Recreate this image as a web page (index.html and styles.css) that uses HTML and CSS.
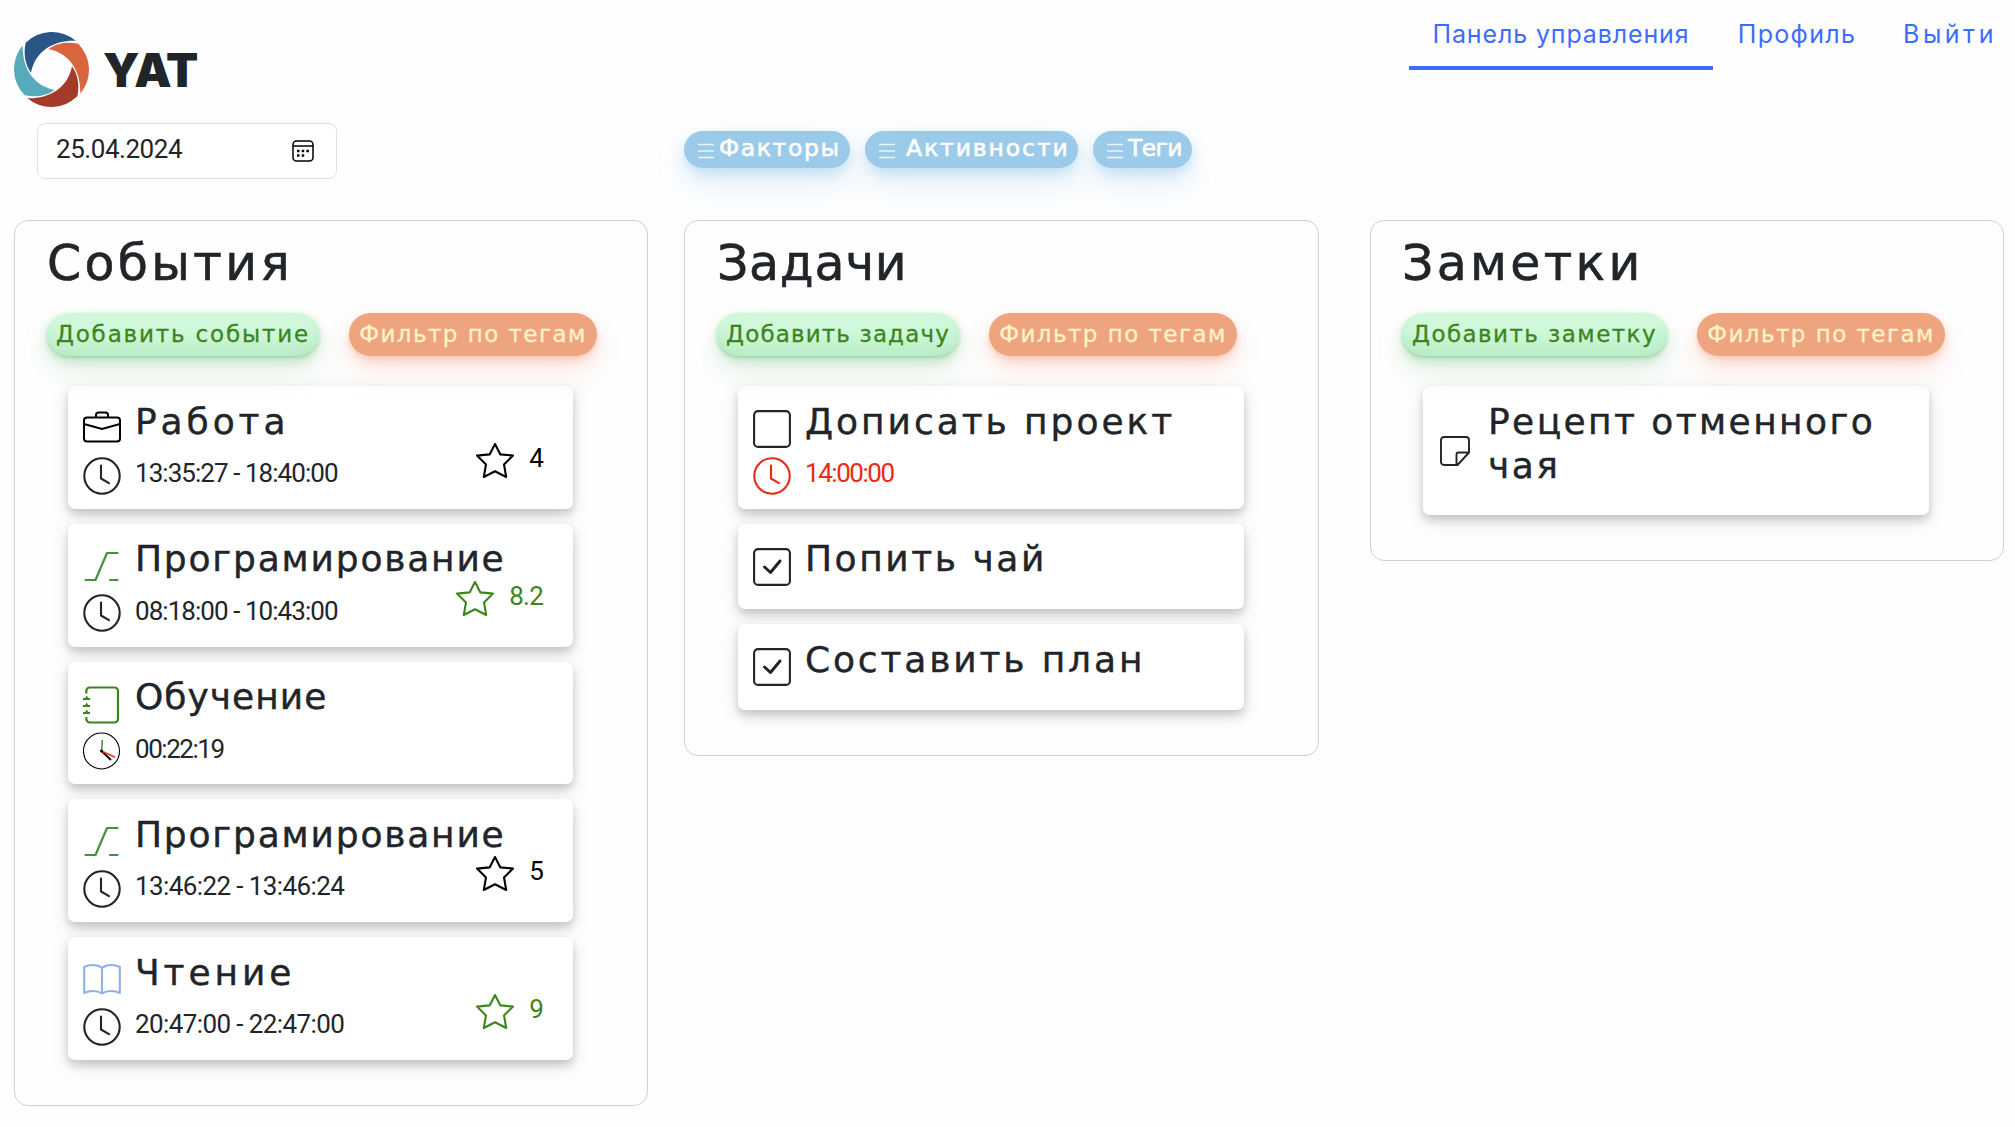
FILE: index.html
```
<!DOCTYPE html>
<html lang="ru">
<head>
<meta charset="utf-8">
<title>YAT</title>
<link rel="stylesheet" href="styles.css">
</head>
<body>
<svg class="sprite">
  <symbol id="clock" viewBox="0 0 38 38"><g fill="none" stroke="currentColor" stroke-width="2.1" stroke-linecap="round" stroke-linejoin="round"><circle cx="19" cy="19" r="17.7"/><path d="M18 8.5v13l8 4.7"/></g></symbol>
  <symbol id="star" viewBox="0 0 38 38"><path d="M19 2l5.4 10.4L37 13.6l-9 8.8 2.2 12.6L19 29.2 7.8 35 10 22.4 1 13.6l12.6-1.2z" fill="none" stroke="currentColor" stroke-width="2.1" stroke-linejoin="round"/></symbol>
  <symbol id="briefcase" viewBox="0 0 38 38"><g fill="none" stroke="currentColor" stroke-width="2"><rect x="1" y="7.5" width="36" height="24" rx="3"/><path d="M13 7.5V5a2.5 2.5 0 0 1 2.5-2.5h7A2.5 2.5 0 0 1 25 5V7.5M1 14l18 5 18-5"/></g></symbol>
  <symbol id="step" viewBox="0 0 38 38"><path d="M2.5 32H12.5L24 5h10.5M27 32h7.5" fill="none" stroke="#45913f" stroke-width="2.2" stroke-linecap="round" stroke-linejoin="round"/></symbol>
  <symbol id="journal" viewBox="0 0 38 38"><path d="M3.3 7.5V5a3.5 3.5 0 0 1 3.5-3.5H31.5A3.5 3.5 0 0 1 35 5v28a3.5 3.5 0 0 1-3.5 3.5H6.8A3.5 3.5 0 0 1 3.3 33v-2" fill="none" stroke="#3b851c" stroke-width="2.2"/><path d="M0 12h2.2l1.5-2.5 1.5 2.5H7v2H0zm0 7h2.2l1.5-2.5 1.5 2.5H7v2H0zm0 7h2.2l1.5-2.5 1.5 2.5H7v2H0z" fill="#3b851c"/></symbol>
  <symbol id="book" viewBox="0 0 38 38"><path d="M19 7C14 3 6 3.5 1.2 6v26C6 29.5 14 29 19 32.5c5-3.5 13-3 17.8-.5V6C32 3.5 24 3 19 7zV32.5" fill="none" stroke="#91b0e8" stroke-width="2.1" stroke-linejoin="round"/></symbol>
  <symbol id="square" viewBox="0 0 38 38"><rect x="1.1" y="1.1" width="35.8" height="35.8" rx="4" fill="none" stroke="currentColor" stroke-width="2.1"/></symbol>
  <symbol id="checked" viewBox="0 0 38 38"><rect x="1.1" y="1.1" width="35.8" height="35.8" rx="4" fill="none" stroke="currentColor" stroke-width="2.1"/><path d="M11.5 19l6 5.5L27 13" fill="none" stroke="currentColor" stroke-width="3" stroke-linecap="round" stroke-linejoin="round"/></symbol>
  <symbol id="list" viewBox="0 0 16 16"><path d="M0 1.5h16M0 8h16M0 14.5h16" stroke="currentColor" stroke-width="1.7"/></symbol>
</svg>

<header class="top">
  <div class="brand">
    <svg class="logo" viewBox="-37.5 -37.5 75 75">
      <path fill="#2a5587" d="M-25.8-26.8A37.2 37.2 0 0 1 24.2-28.8C4-29.5-16-20-20.5 3.2-27-6-28-17-25.8-26.8z"/>
      <path fill="#d9653f" transform="rotate(90)" d="M-25.8-26.8A37.2 37.2 0 0 1 24.2-28.8C4-29.5-16-20-20.5 3.2-27-6-28-17-25.8-26.8z"/>
      <path fill="#a43a29" transform="rotate(180)" d="M-25.8-26.8A37.2 37.2 0 0 1 24.2-28.8C4-29.5-16-20-20.5 3.2-27-6-28-17-25.8-26.8z"/>
      <path fill="#56abbb" transform="rotate(270)" d="M-25.8-26.8A37.2 37.2 0 0 1 24.2-28.8C4-29.5-16-20-20.5 3.2-27-6-28-17-25.8-26.8z"/>
    </svg>
    <span class="name">YAT</span>
  </div>
  <nav class="nav">
    <a class="active">Панель управления</a>
    <a class="profile">Профиль</a>
    <a class="logout">Выйти</a>
  </nav>
</header>

<div class="toolbar">
  <div class="date"><span class="num">25.04.2024</span>
    <svg viewBox="0 0 22 22"><rect x="1" y="1" width="20" height="20" rx="3.5" fill="none" stroke="#000" stroke-width="1.5"/><path d="M1 6h20" stroke="#000" stroke-width="1.5"/><path d="M5 11h2.5M9.7 11h2.5M14.4 11h2.5M5 15.5h2.5M9.7 15.5h2.5" stroke="#000" stroke-width="2.5"/></svg>
  </div>
  <div class="pills">
    <button class="pill factors"><svg><use href="#list"/></svg><span>Факторы</span></button>
    <button class="pill acts"><svg><use href="#list"/></svg><span>Активности</span></button>
    <button class="pill tags"><svg><use href="#list"/></svg><span>Теги</span></button>
  </div>
</div>

<main class="board">
  <section class="panel events">
    <h1>События</h1>
    <div class="actions"><button class="add">Добавить событие</button><button class="filter">Фильтр по тегам</button></div>
    <article class="card work">
      <svg class="icon black"><use href="#briefcase"/></svg><h2>Работа</h2>
      <svg class="icon"><use href="#clock"/></svg><p class="num">13:35:27 - 18:40:00</p>
      <div class="rating black"><svg><use href="#star"/></svg><b>4</b></div>
    </article>
    <article class="card coding">
      <svg class="icon"><use href="#step"/></svg><h2>Програмирование</h2>
      <svg class="icon"><use href="#clock"/></svg><p class="num">08:18:00 - 10:43:00</p>
      <div class="rating green"><svg><use href="#star"/></svg><b>8.2</b></div>
    </article>
    <article class="card study">
      <svg class="icon"><use href="#journal"/></svg><h2>Обучение</h2>
      <svg class="icon" viewBox="0 0 38 38"><circle cx="18.5" cy="19" r="18" fill="none" stroke="#000" stroke-width="1.1"/><path d="M18.5 19L28 28" stroke="#000" stroke-width="1.8"/><path d="M18.5 19L32 25.2" stroke="#ee3a20" stroke-width="1.8"/><path d="M18.7 19L19.3 8" stroke="#45913f" stroke-width="1.6"/><circle cx="18.5" cy="19" r="1.5"/></svg><p class="num single">00:22:19</p>
    </article>
    <article class="card coding">
      <svg class="icon"><use href="#step"/></svg><h2>Програмирование</h2>
      <svg class="icon"><use href="#clock"/></svg><p class="num loose">13:46:22 - 13:46:24</p>
      <div class="rating black"><svg><use href="#star"/></svg><b>5</b></div>
    </article>
    <article class="card reading">
      <svg class="icon"><use href="#book"/></svg><h2>Чтение</h2>
      <svg class="icon"><use href="#clock"/></svg><p class="num loose">20:47:00 - 22:47:00</p>
      <div class="rating green"><svg><use href="#star"/></svg><b>9</b></div>
    </article>
  </section>

  <section class="panel tasks">
    <h1>Задачи</h1>
    <div class="actions"><button class="add">Добавить задачу</button><button class="filter">Фильтр по тегам</button></div>
    <article class="card project">
      <svg class="icon"><use href="#square"/></svg><h2>Дописать проект</h2>
      <svg class="icon late"><use href="#clock"/></svg><p class="num single late">14:00:00</p>
    </article>
    <article class="card short tea">
      <svg class="icon"><use href="#checked"/></svg><h2>Попить чай</h2>
    </article>
    <article class="card short plan">
      <svg class="icon"><use href="#checked"/></svg><h2>Составить план</h2>
    </article>
  </section>

  <section class="panel notes">
    <h1>Заметки</h1>
    <div class="actions"><button class="add">Добавить заметку</button><button class="filter">Фильтр по тегам</button></div>
    <article class="card note">
      <svg class="icon" viewBox="0 0 30 30"><path d="M4 1h22a3 3 0 0 1 3 3v12.5L17.5 29H4a3 3 0 0 1-3-3V4a3 3 0 0 1 3-3zM29 16.5H18.5a2 2 0 0 0-2 2V29" fill="none" stroke="currentColor" stroke-width="1.9" stroke-linejoin="round"/></svg><h2>Рецепт отменного<br>чая</h2>
    </article>
  </section>
</main>
</body>
</html>
```
FILE: styles.css
```
* { box-sizing: border-box; margin: 0; padding: 0; }
body { background: #fefefe; color: #212529; font-family: "DejaVu Sans", "Noto Sans", sans-serif; padding: 0 11px 0 14px; }
.sprite { display: none; }
svg { flex: none; }
button { border: 0; font: inherit; letter-spacing: inherit; display: flex; align-items: center; justify-content: center; white-space: nowrap; position: relative; z-index: 1; }

/* Header */
.top { display: flex; justify-content: space-between; height: 123px; }
.brand { display: flex; padding-top: 32px; gap: 14px; }
.logo { width: 75px; height: 75px; }
.name { font: 900 47px/75px Inter, sans-serif; letter-spacing: -1.3px; }
.nav { display: flex; height: 70px; }
.nav a { display: flex; justify-content: center; width: 304px; font-family: Inter, sans-serif; font-size: 25px; line-height: 69px; letter-spacing: .87px; color: #3d6dff; white-space: nowrap; border-bottom: 4px solid transparent; }
.nav .active { border-color: #3d6dff; }
.nav .profile { width: 166px; padding-left: 2px; letter-spacing: 1.3px; }
.nav .logout { width: 125px; padding-left: 17px; letter-spacing: 3.5px; }

/* Toolbar */
.toolbar { display: flex; height: 97px; padding-left: 23px; }
.date { width: 300px; height: 56px; border: 1px solid #dee2e6; border-radius: 8px; display: flex; justify-content: space-between; align-items: center; padding: 0 22px 0 18px; background: #fff; }
.date span { line-height: 51px; align-self: flex-start; letter-spacing: -.45px; }
.date svg { width: 22px; height: 22px; }
.num { font: 26px Roboto, sans-serif; letter-spacing: -.95px; }
.single { letter-spacing: -1.45px; }
.loose { letter-spacing: -.6px; }
.pills { display: flex; gap: 15px; margin-left: 347px; padding-top: 8px; }
.pill { height: 37px; border-radius: 19px; background: #9bcbe9; color: #fff; font-size: 23.5px; justify-content: flex-start; padding-left: 14px; padding-bottom: 3px; -webkit-text-stroke: .6px; box-shadow: 0 4px 8px rgba(90,165,225,.15), 0 8px 16px rgba(90,165,225,.13), 0 16px 32px rgba(90,165,225,.16); }
.pill svg { width: 16px; height: 16px; margin-top: 5px; opacity: .8; }
.factors { width: 166px; letter-spacing: 1.6px; }
.acts { width: 213px; letter-spacing: 1.9px; }
.tags { width: 99px; letter-spacing: -.6px; }
.pill span { margin-left: 5px; }
.acts span { margin-left: 11px; }

/* Columns */
.board { display: flex; align-items: flex-start; }
.panel { border: 1px solid #d0d0d0; border-radius: 14px; padding: 0 0 45px 32px; }
.events { width: 634px; }
.tasks { width: 635px; margin-left: 36px; }
.notes { width: 634px; margin-left: 51px; padding-left: 31px; }
h1 { font-size: 49px; font-weight: 400; line-height: 85px; height: 92px; letter-spacing: 3.3px; -webkit-text-stroke: .6px; }
.tasks h1 { letter-spacing: .7px; }
.actions { display: flex; gap: 30px; height: 73px; font-size: 23px; letter-spacing: 1.45px; -webkit-text-stroke: .3px; }
.actions button { height: 43px; border-radius: 22px; padding-bottom: 2px; }
.add { width: 272px; color: #3b851c; background: #cff9da; box-shadow: rgba(44,160,70,.15) 0 -25px 18px -14px inset, rgba(44,160,70,.15) 0 1px 2px, rgba(44,160,70,.15) 0 2px 4px, rgba(44,160,70,.13) 0 4px 8px, rgba(44,160,70,.11) 0 8px 16px, rgba(44,160,70,.11) 0 16px 32px; }
.filter { width: 248px; color: #fff3c8; background: #efa480; box-shadow: rgba(240,100,50,.1) 0 2px 4px, rgba(240,100,50,.13) 0 4px 8px, rgba(240,100,50,.1) 0 8px 16px, rgba(240,100,50,.1) 0 16px 32px; }
.events .add { letter-spacing: 1.85px; }
.tasks .add { width: 242px; letter-spacing: 1.15px; }
.notes .add { width: 265px; }

/* Cards */
.card { display: grid; grid-template-columns: 52px 1fr; grid-template-rows: 50px 49px; width: 505px; height: 122.8px; margin: 0 0 15px 21px; padding: 12px 0 0 15px; border-radius: 7px; background: #fff; box-shadow: 0 5px 8px rgba(0,0,0,.17), 0 6px 20px rgba(0,0,0,.1); }
.tasks .card, .notes .card { width: 506px; }
.card:last-child { margin-bottom: 0; }
.icon { width: 38px; height: 38px; margin-top: 8.5px; grid-column: 1; }
.icon:first-child { margin-top: 12px; }
h2 { font-size: 36px; font-weight: 400; line-height: 44px; padding-top: 1.5px; white-space: nowrap; grid-column: 2; grid-row: 1; -webkit-text-stroke: .4px; }
.work h2, .reading h2 { letter-spacing: 3.9px; }
.coding h2 { letter-spacing: 1.8px; }
.study h2 { letter-spacing: 1px; }
.project h2 { letter-spacing: 2.95px; }
.tea h2 { letter-spacing: 2.55px; }
.plan h2 { letter-spacing: 2.85px; }
.note h2 { letter-spacing: 2.4px; }
.card p { line-height: 51px; white-space: nowrap; grid-column: 2; grid-row: 2; }
.rating { grid-area: 1 / 2 / 3 / 3; justify-self: end; display: flex; gap: 15px; padding: 44px 30px 0 0; }
.rating svg { width: 38px; height: 38px; }
.rating b { font: 26px/32px Roboto, sans-serif; letter-spacing: -.8px; }
.short { height: 85.5px; grid-template-rows: 50px; }
.note { height: 129px; grid-template-columns: 48px 1fr; grid-template-rows: 88px; padding-left: 17px; }
.note .icon:first-child { width: 30px; height: 30px; margin-top: 38px; }
.black { color: #000; }
.green { color: #3b851c; }
.late { color: #e82c14; }
```
